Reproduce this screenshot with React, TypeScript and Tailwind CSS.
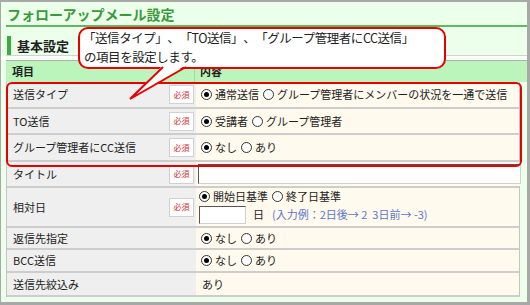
import React from 'react';

const jp = "font-['Noto_Sans_CJK_JP','Noto_Sans',sans-serif]";

function Radio({ on }: { on?: boolean }) {
  return (
    <span className="inline-flex w-[11px] h-[11px] rounded-full border border-[#333] bg-white items-center justify-center shrink-0">
      {on && <span className="w-[5px] h-[5px] rounded-full bg-black" />}
    </span>
  );
}

function Opt({ on, label }: { on?: boolean; label: string }) {
  return (
    <span className="flex items-center gap-[3px] mr-[4px]">
      <Radio on={on} />
      <span>{label}</span>
    </span>
  );
}

function Badge() {
  return (
    <span className="w-[25px] h-[19px] bg-white border border-[#d0d0d0] flex items-center justify-center text-[8px] text-[#d03030] leading-none">
      必須
    </span>
  );
}

function Row({
  label,
  req,
  h,
  children,
}: {
  label: string;
  req?: boolean;
  h: string;
  children: React.ReactNode;
}) {
  return (
    <div className={`flex border-b-2 border-[#cdcdcd] ${h}`}>
      <div className="w-[189px] shrink-0 bg-[#efefef] flex items-center justify-between pl-[6px] pr-[2px]">
        <span>{label}</span>
        {req && <Badge />}
      </div>
      <div className="flex-1 bg-[#fff9ee] flex items-center pl-[5px]">{children}</div>
    </div>
  );
}

export default function App() {
  return (
    <div
      className={`relative w-[530px] h-[305px] overflow-hidden bg-[#ebffeb] border-[#a8a8a8] border-t-2 border-l border-r-[3px] border-b-[3px] text-[#222] [text-spacing-trim:space-all] ${jp}`}
    >
      {/* タイトル */}
      <div className="ml-[5px] h-[25px] border-b-2 border-[#62b862] flex items-center pl-[1px] pt-[1px]">
        <span className="text-[14px] font-bold text-[#3a9a3a] leading-none">フォローアップメール設定</span>
      </div>

      {/* 基本設定 */}
      <div className="ml-[5px] h-[29px] border-b border-[#d2d2d2] flex items-end">
        <span className="w-[4px] h-[19px] bg-[#3aae3a] ml-[1px]" />
        <span className="ml-[6px] h-[19px] flex items-center text-[13px] font-bold leading-none">基本設定</span>
      </div>
      <div className="h-[4px] bg-[#f7fff7]" />

      {/* 見出し */}
      <div className="ml-[5px] h-[22px] flex border-t border-[#b0b0b0] bg-[#bcf5bc] text-[11px] font-bold">
        <div className="w-[189px] border-r border-[#a6d8a6] flex items-center pl-[6px]">項目</div>
        <div className="flex items-center pl-[5px]">内容</div>
      </div>

      {/* 表 */}
      <div className="ml-[5px] w-[514px] border-x border-[#c4c4c4] text-[11px] leading-none">
        <Row label="送信タイプ" req h="h-[27px]">
          <Opt on label="通常送信" />
          <Opt label="グループ管理者にメンバーの状況を一通で送信" />
        </Row>
        <Row label="TO送信" req h="h-[26px]">
          <Opt on label="受講者" />
          <Opt label="グループ管理者" />
        </Row>
        <Row label="グループ管理者にCC送信" req h="h-[27px]">
          <Opt on label="なし" />
          <Opt label="あり" />
        </Row>
        <Row label="タイトル" req h="h-[26px]">
          <div className="-ml-[3px] w-[323px] h-[20px] bg-white border border-[#cfcfcf] border-t-[#555] border-l-[#555]" />
        </Row>
        <Row label="相対日" req h="h-[40px]">
          <div className="flex flex-col gap-[4px] -ml-[2px]">
            <div className="flex items-center">
              <Opt on label="開始日基準" />
              <Opt label="終了日基準" />
            </div>
            <div className="flex items-center">
              <div className="w-[47px] h-[18px] bg-white border border-[#cfcfcf] border-t-[#555] border-l-[#555]" />
              <span className="ml-[7px]">日</span>
              <span className="ml-[8px] text-[#5878c8]">(入力例：2日後→ 2&nbsp;&nbsp;3日前→ -3)</span>
            </div>
          </div>
        </Row>
        <Row label="返信先指定" h="h-[22px]">
          <Opt on label="なし" />
          <Opt label="あり" />
        </Row>
        <Row label="BCC送信" h="h-[23px]">
          <Opt on label="なし" />
          <Opt label="あり" />
        </Row>
        <Row label="送信先絞込み" h="h-[24px]">
          <span className="pl-[1px]">あり</span>
        </Row>
      </div>

      {/* 赤枠 */}
      <div className="absolute left-[5px] top-[80px] w-[516px] h-[85px] border-2 border-[#e60000] rounded-[6px] pointer-events-none" />

      {/* 吹き出し */}
      <div className="absolute left-[77px] top-[25px] w-[368px] h-[42px] bg-white border-2 border-[#e60000] rounded-[10px] text-[12.5px] tracking-[-0.45px] leading-[19px] pl-[3px] whitespace-nowrap">
        <div className="-mt-[1px]">「送信タイプ」、「TO送信」、「グループ管理者にCC送信」</div>
        <div className="pl-[1px]">の項目を設定します。</div>
      </div>
      <svg className="absolute left-0 top-0 pointer-events-none" width="526" height="300" viewBox="0 0 526 300">
        <polygon points="162,63 185,63 129,97" fill="#fff" />
        <polyline points="162,65 129,97 185,65" fill="none" stroke="#e60000" strokeWidth="2" strokeLinejoin="miter" />
      </svg>
    </div>
  );
}
